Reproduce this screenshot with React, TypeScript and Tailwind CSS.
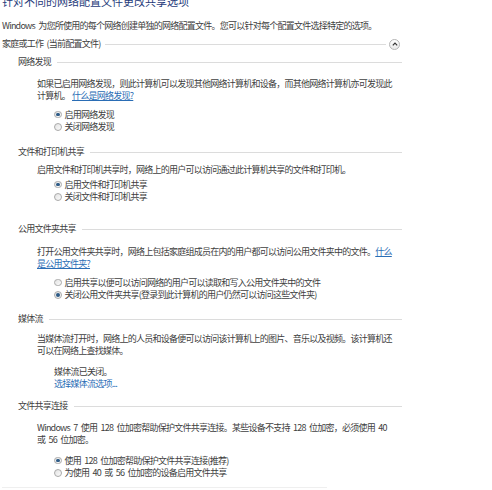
import React from "react";

function Radio({ checked }: { checked?: boolean }) {
  return (
    <span className="flex h-[7.5px] w-[7.5px] shrink-0 items-center justify-center rounded-full border border-[#a9a9a9] bg-gradient-to-br from-[#e3e3e3] to-[#fbfbfb]">
      {checked && <span className="h-[3.5px] w-[3.5px] rounded-full bg-[#2d5a86]" />}
    </span>
  );
}

function Option({ label, checked }: { label: string; checked?: boolean }) {
  return (
    <div className="flex h-[12.5px] items-center gap-[3px] pl-[52px]">
      <Radio checked={checked} />
      <span className="whitespace-nowrap">{label}</span>
    </div>
  );
}

function SubHeading({ title, className = "" }: { title: string; className?: string }) {
  return (
    <div className={`flex h-[12px] items-center gap-[6px] pl-[16px] ${className}`}>
      <span className="whitespace-nowrap">{title}</span>
      <div className="h-px flex-1 bg-[#dcdcdc]" />
    </div>
  );
}

function Para({ children, className = "" }: { children: React.ReactNode; className?: string }) {
  return <div className={`pl-[35px] leading-[12px] whitespace-nowrap ${className}`}>{children}</div>;
}

export default function App() {
  return (
    <div className="h-[490px] w-[492px] overflow-hidden bg-white font-['Noto_Sans_CJK_SC',sans-serif] text-[9px] tracking-[-0.75px] [word-spacing:2px] text-[#404040]">
      <div className="w-[402px] pl-[2px]">
        <div className="-mt-[5px] h-[12px] whitespace-nowrap text-[11px] leading-[12px] tracking-normal text-[#1f3b7a]">
          针对不同的网络配置文件更改共享选项
        </div>

        <div className="mt-[13px] h-[12px] leading-[12px] whitespace-nowrap">
          Windows 为您所使用的每个网络创建单独的网络配置文件。您可以针对每个配置文件选择特定的选项。
        </div>

        <div className="mt-[6px] flex h-[12px] items-center">
          <span className="whitespace-nowrap">家庭或工作 (当前配置文件)</span>
          <div className="ml-[4px] h-px flex-1 bg-[#dcdcdc]" />
          <button className="ml-[3px] flex h-[11px] w-[11px] items-center justify-center rounded-full border border-[#b5b5b5] bg-gradient-to-b from-[#ffffff] to-[#e9e9e9]">
            <svg width="6" height="4" viewBox="0 0 6 4">
              <path d="M0.8 3.3 L3 1 L5.2 3.3" fill="none" stroke="#333" strokeWidth="1.2" />
            </svg>
          </button>
          <div className="w-[2px]" />
        </div>

        <SubHeading title="网络发现" className="mt-[6px]" />
        <Para className="mt-[10px]">
          如果已启用网络发现，则此计算机可以发现其他网络计算机和设备，而其他网络计算机亦可发现此
          <br />
          计算机。
          <a className="ml-[2px] text-[#2a6db5] underline">什么是网络发现?</a>
        </Para>
        <div className="mt-[6px]">
          <Option label="启用网络发现" checked />
          <Option label="关闭网络发现" />
        </div>

        <SubHeading title="文件和打印机共享" className="mt-[13px]" />
        <Para className="mt-[6px]">启用文件和打印机共享时，网络上的用户可以访问通过此计算机共享的文件和打印机。</Para>
        <div className="mt-[2px]">
          <Option label="启用文件和打印机共享" checked />
          <Option label="关闭文件和打印机共享" />
        </div>

        <SubHeading title="公用文件夹共享" className="mt-[20px]" />
        <Para className="mt-[11px]">
          打开公用文件夹共享时，网络上包括家庭组成员在内的用户都可以访问公用文件夹中的文件。
          <a className="text-[#2a6db5] underline">什么</a>
          <br />
          <a className="text-[#2a6db5] underline">是公用文件夹?</a>
        </Para>
        <div className="mt-[6px]">
          <Option label="启用共享以便可以访问网络的用户可以读取和写入公用文件夹中的文件" />
          <Option label="关闭公用文件夹共享(登录到此计算机的用户仍然可以访问这些文件夹)" checked />
        </div>

        <SubHeading title="媒体流" className="mt-[12px]" />
        <Para className="mt-[8px]">
          当媒体流打开时，网络上的人员和设备便可以访问该计算机上的图片、音乐以及视频。该计算机还
          <br />
          可以在网络上查找媒体。
        </Para>
        <div className="mt-[9px] pl-[52px] leading-[12px]">
          <div>媒体流已关闭。</div>
          <a className="block text-[#2a6db5]">选择媒体流选项...</a>
        </div>

        <SubHeading title="文件共享连接" className="mt-[10px]" />
        <Para className="mt-[10px]">
          Windows 7 使用 128 位加密帮助保护文件共享连接。某些设备不支持 128 位加密，必须使用 40
          <br />
          或 56 位加密。
        </Para>
        <div className="mt-[8px]">
          <Option label="使用 128 位加密帮助保护文件共享连接(推荐)" checked />
          <Option label="为使用 40 或 56 位加密的设备启用文件共享" />
        </div>
        <div className="mt-[8px] h-px w-[325px] bg-[#efefef]" />
      </div>
    </div>
  );
}
